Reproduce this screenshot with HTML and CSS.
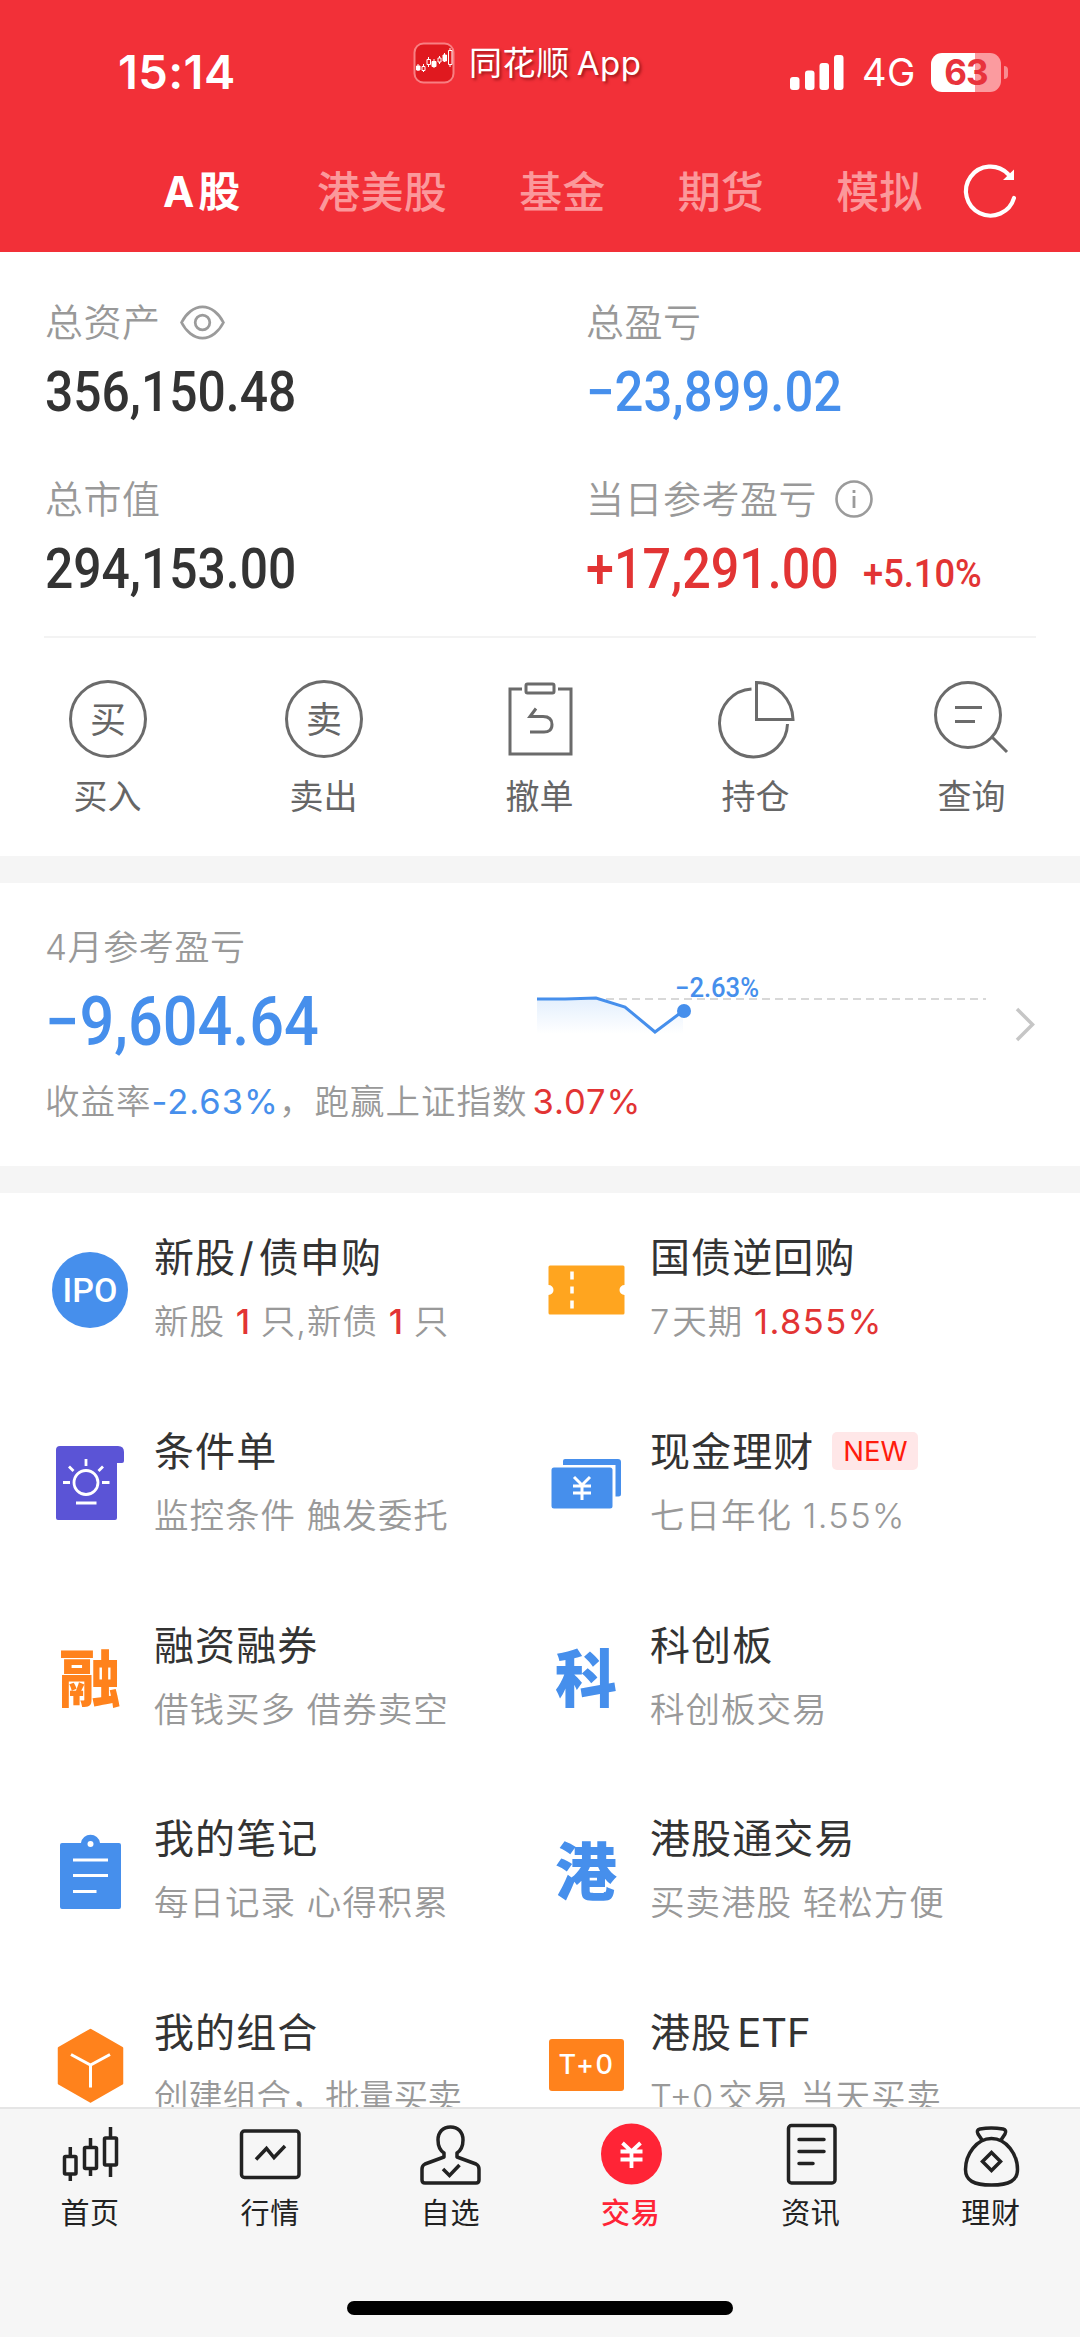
FILE: index.html
```html
<!DOCTYPE html>
<html lang="zh-CN">
<head>
<meta charset="utf-8">
<title>交易</title>
<link rel="stylesheet" href="styles.css">
</head>
<body>
<div class="app">
<header class="header">
  <div class="status">
    <span class="time">15:14</span>
    <div class="island">
      <svg class="appicon" viewBox="0 0 42 42"><rect x="1.500" y="1.500" width="39" height="39" rx="9" fill="#e0191f" stroke="#f87f82" stroke-width="2"/><g stroke="#fff" stroke-width="1" fill="#fff"><path d="M5 22v7M10.500 22v8M15.500 15v10M21 17v9M26.500 14v8M31.500 11v9M37 6v19"/><path d="M3.500 24h3.500v4H3.500zM19 19.500h4v5h-4zM30 13h3.500v6H30z"/><path d="M9 24.500h3v4H9zM14 17.500h3.500v5H14zM25 16h3v4h-3zM35.500 8.500h3.500v14h-3.500z" fill="#e0191f"/></g></svg>
      <span class="appname">同花顺 App</span>
    </div>
    <div class="signals">
      <svg class="bars" viewBox="0 0 54 35"><g fill="#fff"><rect x="0" y="22" width="9.500" height="13" rx="3"/><rect x="15" y="15.500" width="9.500" height="19.500" rx="3"/><rect x="29.500" y="8" width="9.500" height="27" rx="3"/><rect x="44" y="0" width="9.500" height="35" rx="3"/></g></svg>
      <span class="net">4G</span>
      <div class="battery"><span>63</span></div><i class="nub"></i>
    </div>
  </div>
  <nav class="markets">
    <span class="market on">A股</span><span class="market">港美股</span><span class="market">基金</span><span class="market">期货</span><span class="market">模拟</span>
    <svg class="refresh" viewBox="960 161 56 60"><path d="M1012 197A24.500 24.500 0 1 1 1006 173" fill="none" stroke="#fff" stroke-width="4.200" stroke-linecap="round"/><path d="M1012 168.500v10.500h-11z" fill="#fff"/></svg>
  </nav>
</header>

<section class="summary">
  <div class="totals">
    <div class="total">
      <div class="label"><span>总资产</span><svg class="eye" viewBox="180 303 46 38"><g fill="none" stroke="#9b9b9b" stroke-width="2.800"><path d="M181.500 322C186 313 194 306 203 306S220 313 224.500 322C220 331 212 338 203 338S186 331 181.500 322z"/><circle cx="203" cy="322" r="7.500"/></g></svg></div>
      <div class="value"><span class="num plain">356,150.48</span></div>
    </div>
    <div class="total">
      <div class="label"><span>总盈亏</span></div>
      <div class="value blue"><span class="num">−23,899.02</span></div>
    </div>
    <div class="total">
      <div class="label"><span>总市值</span></div>
      <div class="value"><span class="num plain">294,153.00</span></div>
    </div>
    <div class="total">
      <div class="label"><span>当日参考盈亏</span><svg class="info" viewBox="0 0 40 40"><circle cx="20" cy="20" r="17.500" fill="none" stroke="#9b9b9b" stroke-width="2.600"/><path d="M20 17v12M20 11v3" stroke="#9b9b9b" stroke-width="2.800"/></svg></div>
      <div class="value red"><span class="num gain">+17,291.00</span><span class="rate">+5.10%</span></div>
    </div>
  </div>
  <div class="actions">
    <div class="action"><span class="ring">买</span><span>买入</span></div>
    <div class="action"><span class="ring">卖</span><span>卖出</span></div>
    <div class="action"><svg class="aicon" viewBox="500 679 80 80"><g fill="none" stroke="#6b6b6b" stroke-width="3"><path d="M522 689H510v65h61v-65H558"/><rect x="526" y="684" width="28" height="9" rx="1.500"/><path d="M536 708.500l-6 8h13q9 0 9 8t-9 7.500h-13"/></g></svg><span>撤单</span></div>
    <div class="action"><svg class="aicon" viewBox="715.500 679 80 80"><g fill="none" stroke="#6b6b6b" stroke-width="3"><path d="M751 689a34 34 0 1 0 36 35"/><path d="M756 682.500v37h36.500c-.5-20-16-37-36.500-37z"/></g></svg><span>持仓</span></div>
    <div class="action"><svg class="aicon" viewBox="931 678 80 80"><g fill="none" stroke="#6b6b6b" stroke-width="3"><circle cx="967" cy="714" r="32.500"/><path d="M954 706.500h27M954 720.500h20M991 736l15 15"/></g></svg><span>查询</span></div>
  </div>
</section>

<section class="month">
  <div class="mlabel">4月参考盈亏</div>
  <div class="mrow">
    <span class="mnum">−9,604.64</span>
    <svg class="chart" viewBox="530 971 520 80">
      <defs><linearGradient id="fade" x1="0" y1="0" x2="0" y2="1"><stop offset="0" stop-color="#e3effd"/><stop offset="1" stop-color="#fff"/></linearGradient></defs>
      <path d="M537 999H565L596 998 625 1007 655 1032 683 1011V1034H537z" fill="url(#fade)"/>
      <path d="M606 999H986" stroke="#d8d8d8" stroke-width="2" stroke-dasharray="8 5"/>
      <path d="M537 999H565L596 998 625 1007 655 1032 683 1011" fill="none" stroke="#468fec" stroke-width="3"/>
      <circle cx="684" cy="1011" r="7" fill="#468fec"/>
      <text class="charttext" x="675" y="996.500" textLength="84" lengthAdjust="spacingAndGlyphs">−2.63%</text>
      <path d="M1017 1009l15.500 15.500L1017 1040" fill="none" stroke="#c6c6c6" stroke-width="3.500"/>
    </svg>
  </div>
  <div class="mnote">收益率<b class="blue">-2.63%</b>，跑赢上证指数<b class="red win">3.07%</b></div>
</section>

<section class="features">
  <div class="feature"><span class="ipo">IPO</span><div class="ftext"><h3>新股<span class="slash">/</span>债申购</h3><p>新股 <b class="one">1</b> 只,新债 <b class="one">1</b> 只</p></div></div>
  <div class="feature"><svg class="ficon" viewBox="546 1250 80 80"><path d="M550 1265.500h73q1.500 0 1.500 1.500v18a5 5 0 0 0 0 10v18q0 1.500-1.500 1.500h-73q-1.500 0-1.500-1.500v-18a5 5 0 0 0 0-10v-18q0-1.500 1.500-1.500z" fill="#ffa51f"/><path d="M572 1271.500v8M572 1286.500v7M572 1300.500v8" stroke="#fff" stroke-width="3.500"/></svg><div class="ftext"><h3>国债逆回购</h3><p><span class="days">7</span>天期 <b class="red yield">1.855%</b></p></div></div>

  <div class="feature"><svg class="ficon" viewBox="50 1444 80 80"><path d="M60 1446h58q6 0 6 6v9q0 2-2 2h-5v55q0 2-2 2H58q-2 0-2-2v-68q0-4 4-4z" fill="#5b54d6"/><g fill="none" stroke="#fff" stroke-width="2.800"><circle cx="86" cy="1482.500" r="12"/><path d="M86 1459v7M63 1482.500h7M102 1482.500h7.500M69 1466.500l4.500 4.500M103 1466.500l-4.500 4.500M76 1503h20.500"/></g></svg><div class="ftext"><h3>条件单</h3><p>监控条件 触发委托</p></div></div>
  <div class="feature"><svg class="ficon" viewBox="546 1444 80 80"><g fill="#468fec"><path d="M565 1459h53q3 0 3 3v32q0 2.500-2.500 2.500h-3V1465H563v-4q0-2 2-2z"/><rect x="551.500" y="1467.500" width="61" height="41" rx="2.500"/></g><path d="M574 1477l8 8 8-8M573 1486h18M573 1493h18M582 1485v15" fill="none" stroke="#fff" stroke-width="3"/></svg><div class="ftext"><h3>现金理财<em class="new">NEW</em></h3><p>七日年化 <span class="yield">1.55%</span></p></div></div>

  <div class="feature"><span class="glyph orange">融</span><div class="ftext"><h3>融资融券</h3><p>借钱买多 借券卖空</p></div></div>
  <div class="feature"><span class="glyph blue">科</span><div class="ftext"><h3>科创板</h3><p>科创板交易</p></div></div>

  <div class="feature"><svg class="ficon" viewBox="50 1831 80 80"><path d="M62 1843h19a9.600 9.600 0 0 1 19 0h19q2 0 2 2v62q0 2-2 2H62q-2 0-2-2v-62q0-2 2-2z" fill="#468fec"/><circle cx="90.500" cy="1844" r="3" fill="#fff"/><path d="M73 1860h35M73 1875.500h35M73 1891.500h23.500" stroke="#fff" stroke-width="3"/></svg><div class="ftext"><h3>我的笔记</h3><p>每日记录 心得积累</p></div></div>
  <div class="feature"><span class="glyph blue">港</span><div class="ftext"><h3>港股通交易</h3><p>买卖港股 轻松方便</p></div></div>

  <div class="feature"><svg class="ficon" viewBox="50 2024.500 80 80"><path d="M90.500 2029.500L122 2047.500V2083L90.500 2101 59 2083V2047.500z" fill="#ff821c" stroke="#ff821c" stroke-width="2.500" stroke-linejoin="round"/><path d="M71 2054l19.500 10.500L110 2054M90.500 2064.500V2087" fill="none" stroke="#fff" stroke-width="3"/></svg><div class="ftext"><h3>我的组合</h3><p class="tight">创建组合，批量买卖</p></div></div>
  <div class="feature"><span class="tzero">T+0</span><div class="ftext"><h3>港股<span class="etf">ETF</span></h3><p><span class="t0">T+0</span>交易 当天买卖</p></div></div>
</section>

<nav class="tabbar">
  <div class="tabs">
    <div class="tab"><svg class="ticon" viewBox="58 2122 64 64"><g fill="none" stroke="#222" stroke-width="3.500"><rect x="64.500" y="2156.500" width="11.500" height="17.500" rx="1"/><rect x="84.500" y="2147.500" width="12" height="21" rx="1"/><rect x="104.500" y="2138" width="12" height="27" rx="1"/><path d="M70.300 2147v9M70.300 2174v7M90.500 2138v9M90.500 2169v7M110.500 2127v11M110.500 2165v12"/></g></svg><span>首页</span></div>
    <div class="tab"><svg class="ticon" viewBox="238 2122 64 64"><g fill="none" stroke="#222" stroke-width="3.500"><rect x="241.500" y="2131" width="57.500" height="46.500" rx="3"/><path d="M256 2159.500l10.500-11 7.500 9 11-11.500"/></g></svg><span>行情</span></div>
    <div class="tab"><svg class="ticon" viewBox="418 2122 64 64"><g fill="none" stroke="#222" stroke-width="3.500" stroke-linejoin="round"><path d="M444 2157v-4q-6-4-6-13c0-8 5-13 12.500-13s12.500 5 12.500 13q0 9-6 13v4l19 7q3 1.500 3 5v11q0 3-3 3h-51q-3 0-3-3v-11q0-3.500 3-5z"/><path d="M443 2169l6.500 6.500 10-10.500" stroke-linejoin="miter"/></g></svg><span>自选</span></div>
    <div class="tab on"><svg class="ticon" viewBox="598 2122 64 64"><circle cx="630.500" cy="2154" r="30.500" fill="#ff2436"/><path d="M621.500 2143l9 8.500 9-8.500M619.500 2151.500h22M619.500 2159.500h22M630.500 2151v17" fill="none" stroke="#fff" stroke-width="3.800"/></svg><span>交易</span></div>
    <div class="tab"><svg class="ticon" viewBox="778 2122 64 64"><g fill="none" stroke="#222" stroke-width="3.500" stroke-linecap="round"><rect x="787.500" y="2125.500" width="46.500" height="57.500" rx="3"/><path d="M798 2139.500h25M798 2151.500h25M798 2163.500h14"/></g></svg><span>资讯</span></div>
    <div class="tab"><svg class="ticon" viewBox="958 2122 64 64"><g fill="none" stroke="#222" stroke-width="3.500" stroke-linejoin="round"><path d="M981 2140l-4-6q-2-4 2-5 11-2 23 0 4 1 2 5l-4 6"/><path d="M990.500 2138.500c-15 0-26 16-26 31 0 11 8 15.500 26 15.500s26-4.500 26-15.500c0-15-11-31-26-31z"/><path d="M990.500 2152.500l9 9-9 9-9-9z" stroke-linejoin="miter"/></g></svg><span>理财</span></div>
  </div>
  <div class="home"></div>
</nav>
</div>
</body>
</html>
```

FILE: styles.css
```css
* { box-sizing: border-box; }
body { margin: 0; background: #fff; font-family: Inter, "Noto Sans CJK SC", sans-serif; color: #333; }
.app { width: 1080px; height: 2337px; display: flex; flex-direction: column; overflow: hidden; }
svg { display: block; flex: none; overflow: visible; }
.red { color: #e23434; }
.blue { color: #468fec; }
.orange { color: #ff821c; }
b { font-weight: 400; }

.header { height: 252px; background: #f23038; color: #fff; flex: none; }
.status { height: 132px; display: grid; grid-template-columns: 413px 377px 1fr; }
.time { padding: 44px 0 0 118px; font-size: 47px; line-height: 56px; font-weight: 600; letter-spacing: 0.4px; }
.island { display: flex; align-items: center; gap: 14px; height: 42px; margin-top: 42px; }
.appicon { width: 42px; height: 42px; }
.appname { font-size: 33px; line-height: 42px; white-space: nowrap; word-spacing: -3px; letter-spacing: .6px; text-shadow: 2px 2px 3px rgba(90,0,0,.55); }
.signals { display: flex; align-items: center; height: 40px; margin-top: 52px; }
.bars { width: 54px; height: 35px; }
.net { font-size: 38px; line-height: 40px; margin-left: 18px; width: 69px; letter-spacing: .5px; }
.battery { width: 70px; height: 39px; border-radius: 11px; background: linear-gradient(90deg, #fff 63%, #fb9b9f 63%); color: #e8333c; font-weight: 700; font-size: 35px; line-height: 39px; text-align: center; letter-spacing: -1px; }
.nub { width: 4px; height: 13px; margin-left: 3px; border-radius: 0 4px 4px 0; background: #f98c90; }
.markets { display: flex; align-items: center; height: 120px; padding-left: 163px; }
.market { font-size: 43px; line-height: 60px; color: #fb989b; font-weight: 500; margin-right: 72px; white-space: nowrap; }
.market:nth-child(3), .market:nth-child(4) { margin-right: 72.500px; }
.market:nth-child(2) { letter-spacing: .4px; }
.market.on { width: 78px; color: #fff; font-weight: 700; font-size: 42px; letter-spacing: 4px; margin-right: 76px; }
.market:nth-child(5) { margin-right: 40px; }
.refresh { width: 56px; height: 60px; }

.summary { height: 604px; padding: 0 44px; flex: none; }
.totals { height: 386px; border-bottom: 2px solid #f3f3f3; display: grid; grid-template-columns: 541px 1fr; grid-template-rows: 177px 177px; padding-top: 42px; padding-left: 1px; }
.label { display: flex; align-items: center; height: 56px; font-size: 38px; letter-spacing: .5px; color: #999; font-family: "Noto Sans CJK SC", sans-serif; font-weight: 350; white-space: nowrap; }
.label span { margin-top: -5px; }
.eye { width: 45px; height: 37px; margin-left: 19px; }
.info { width: 40px; height: 40px; margin-left: 17px; }
.value { height: 70px; padding-top: 7px; font-family: Roboto, sans-serif; font-size: 55px; line-height: 70px; font-weight: 500; display: flex; }
.num { display: block; width: 250px; white-space: nowrap; transform: scaleX(.924); transform-origin: left; }
.num.plain { transform: scaleX(.905); }
.num.gain { transform: scaleX(.913); }
.rate { font-size: 38px; margin-left: 27px; transform: translateY(5px) scaleX(.955); transform-origin: left; }
.actions { display: grid; grid-template-columns: repeat(5, 216px); margin: 41px -44px 0; }
.action { display: flex; flex-direction: column; align-items: center; gap: 11px; font-size: 34px; line-height: 50px; color: #666; font-family: "Noto Sans CJK SC", sans-serif; }
.action > span:last-child { margin-left: -1px; }
.ring { width: 78px; height: 78px; margin: 1px; border: 3px solid #6b6b6b; border-radius: 50%; line-height: 68px; text-align: center; font-size: 36px; }
.aicon { width: 80px; height: 80px; }

.month { height: 337px; border-top: 27px solid #f5f5f5; border-bottom: 27px solid #f5f5f5; flex: none; padding: 39px 0 0 45px; }
.mlabel { font-size: 35px; line-height: 50px; letter-spacing: .6px; color: #999; font-weight: 350; }
.mrow { display: flex; height: 100px; margin-top: -1px; }
.mnum { width: 485px; font: 500 68px/102px Roboto, sans-serif; color: #468fec; transform: scaleX(.9); transform-origin: left; white-space: nowrap; }
.chart { width: 520px; height: 80px; }
.charttext { font: 500 27px Roboto, sans-serif; fill: #468fec; }
.mnote { font-size: 34.500px; line-height: 50px; margin-top: 6px; color: #999; letter-spacing: 1px; white-space: nowrap; font-weight: 350; }
.win { margin-left: 5px; }

.features { flex: 1; min-height: 0; overflow: hidden; display: grid; grid-template-columns: 496px 1fr; grid-template-rows: repeat(5, 193.800px); padding: 27px 0 0 50px; }
.feature { display: flex; gap: 24px; height: 140px; }
.ficon { width: 80px; height: 80px; margin-top: 30px; }
.ftext { min-width: 0; white-space: nowrap; }
h3 { margin: 8px 0 0; font-size: 40px; line-height: 60px; font-weight: 400; letter-spacing: 1.100px; color: #333; }
.slash { margin: 0 4px 0 3px; }
.etf { margin-left: 5px; letter-spacing: 0; }
p { margin: 9px 0 0; font-size: 34.500px; line-height: 50px; letter-spacing: 1px; color: #999; font-weight: 350; }
p.tight { letter-spacing: -.3px; }
.yield { letter-spacing: 1.400px; }
.days { margin-right: 2px; }
.t0 { margin-right: 5px; letter-spacing: 0; }
.one { color: #e23434; font-weight: 500; letter-spacing: 0; }
.ipo { width: 76px; height: 76px; margin: 32px 2px 0; border-radius: 50%; background: #468fec; color: #fff; font: 500 34px/77px Roboto, sans-serif; text-align: center; flex: none; }
.tzero { width: 75px; height: 52px; margin: 44px 2px 0 3px; border-radius: 3px; background: #ff821c; color: #fff; font-size: 27px; line-height: 52px; text-align: center; flex: none; letter-spacing: 1.500px; font-weight: 500; }
.glyph { width: 80px; font: 900 62px/80px "Noto Sans CJK SC", sans-serif; margin-top: 27px; text-align: center; flex: none; }
.new { display: inline-block; width: 86px; height: 38px; margin-left: 18px; border-radius: 5px; background: #ffe7e8; color: #ff1c0c; font: 400 27.500px/39px Inter, sans-serif; text-align: center; letter-spacing: 0; vertical-align: 5px; }

.tabbar { height: 230px; flex: none; background: #f6f6f6; border-top: 2px solid #e5e5e5; }
.tabs { display: grid; grid-template-columns: repeat(6, 180.200px); padding-top: 13px; height: 192px; }
.tab { display: flex; flex-direction: column; align-items: center; gap: 4px; color: #222; font-size: 29px; line-height: 42px; letter-spacing: .7px; font-family: "Noto Sans CJK SC", sans-serif; }
.tab.on { color: #ff2436; font-weight: 500; }
.ticon { width: 64px; height: 64px; }
.home { width: 386px; height: 14px; margin: 0 auto; border-radius: 7px; background: #000; }
```
